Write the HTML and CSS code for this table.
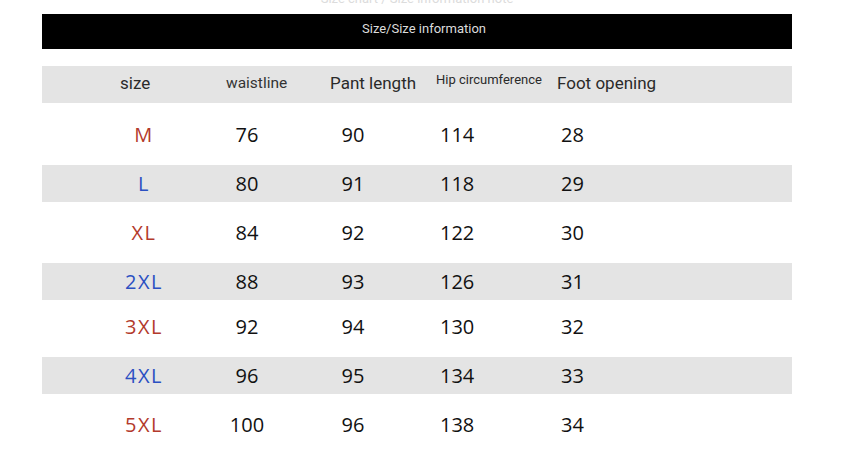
FILE: index.html
```html
<!DOCTYPE html>
<html>
<head>
<meta charset="utf-8">
<link rel="stylesheet" href="styles.css">
</head>
<body>
<div class="page">
  <div class="cut"><span>Size chart / Size information note</span></div>
  <div class="titlebar">Size/Size information</div>
  <div class="table">
    <div class="row head">
      <div class="c1 h-size">size</div>
      <div class="c2 h-waist">waistline</div>
      <div class="c3 h-pant">Pant length</div>
      <div class="c4 h-hip">Hip circumference</div>
      <div class="c5 h-foot">Foot opening</div>
    </div>
    <div class="row r62">
      <div class="c1 sz red">M</div><div class="c2"><span class="v2">76</span></div><div class="c3"><span class="v3">90</span></div><div class="c4 v4">114</div><div class="c5 v5">28</div>
    </div>
    <div class="row gray">
      <div class="c1 sz blue">L</div><div class="c2"><span class="v2">80</span></div><div class="c3"><span class="v3">91</span></div><div class="c4 v4">118</div><div class="c5 v5">29</div>
    </div>
    <div class="row r61">
      <div class="c1 sz red">XL</div><div class="c2"><span class="v2">84</span></div><div class="c3"><span class="v3">92</span></div><div class="c4 v4">122</div><div class="c5 v5">30</div>
    </div>
    <div class="row gray">
      <div class="c1 sz blue">2XL</div><div class="c2"><span class="v2">88</span></div><div class="c3"><span class="v3">93</span></div><div class="c4 v4">126</div><div class="c5 v5">31</div>
    </div>
    <div class="row r57 up">
      <div class="c1 sz red">3XL</div><div class="c2"><span class="v2">92</span></div><div class="c3"><span class="v3">94</span></div><div class="c4 v4">130</div><div class="c5 v5">32</div>
    </div>
    <div class="row gray">
      <div class="c1 sz blue">4XL</div><div class="c2"><span class="v2">96</span></div><div class="c3"><span class="v3">95</span></div><div class="c4 v4">134</div><div class="c5 v5">33</div>
    </div>
    <div class="row r61">
      <div class="c1 sz red">5XL</div><div class="c2"><span class="v2">100</span></div><div class="c3"><span class="v3">96</span></div><div class="c4 v4">138</div><div class="c5 v5">34</div>
    </div>
  </div>
</div>
</body>
</html>
```
FILE: styles.css
```css
html, body {
  margin: 0;
  padding: 0;
  background: #fff;
}
.page {
  width: 850px;
  height: 463px;
  overflow: hidden;
  padding-left: 42px;
  box-sizing: border-box;
}
.cut {
  width: 750px;
  height: 14px;
  overflow: hidden;
  display: flex;
  justify-content: center;
  align-items: flex-start;
}
.cut span {
  font-family: Roboto, sans-serif;
  font-size: 13px;
  line-height: 13px;
  color: #dcdcdc;
  margin-top: -8px;
}
.titlebar {
  width: 750px;
  height: 35px;
  background: #000;
  color: #dcdcdc;
  font-family: Roboto, "Liberation Sans", sans-serif;
  font-size: 13px;
  display: flex;
  align-items: center;
  justify-content: center;
  padding-left: 14px;
  padding-bottom: 6px;
  box-sizing: border-box;
}
.table {
  margin-top: 17px;
  width: 750px;
}
.row {
  display: grid;
  grid-template-columns: 184px 104px 106px 121px 235px;
  align-items: center;
  height: 37px;
  font-family: "Open Sans", "Noto Sans", sans-serif;
  font-size: 20px;
  color: #111;
}
.row.gray, .row.head { background: #e4e4e4; }
.row.r62 { height: 62px; }
.row.r61 { height: 61px; }
.row.r57 { height: 57px; }
.row.up { padding-bottom: 4px; box-sizing: border-box; }
.head {
  font-family: Roboto, "Liberation Sans", sans-serif;
  color: #2a2a2a;
  padding-bottom: 4px;
  box-sizing: border-box;
}
.h-size { padding-left: 78px; font-size: 17px; }
.h-waist { font-size: 15.5px; color: #333; }
.h-pant { font-size: 17px; }
.h-hip { font-size: 13px; margin-top: -6px; }
.h-foot { font-size: 17px; }
.sz {
  padding-left: 20px;
  text-align: center;
  letter-spacing: 1.5px;
}
.red { color: #b33a2c; }
.blue { color: #2b50c2; }
.v2 { display: block; width: 42px; text-align: center; }
.v3 { display: block; width: 46px; text-align: center; }
.v4 { padding-left: 4px; }
.v5 { padding-left: 4px; }
```
